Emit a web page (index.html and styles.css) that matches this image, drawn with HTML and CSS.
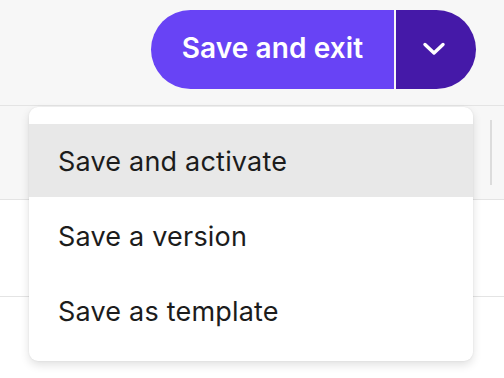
FILE: index.html
```html
<!DOCTYPE html>
<html>
<head>
<meta charset="utf-8">
<link rel="stylesheet" href="styles.css">
</head>
<body>
<div class="page">
  <header class="topbar">
    <div class="split">
      <button class="split-main">Save and exit</button>
      <button class="split-toggle" aria-label="More">
        <svg width="24" height="16" viewBox="0 0 24 16"><path d="M3 3.5 L12 12 L21 3.5" fill="none" stroke="#fff" stroke-width="3.4" stroke-linecap="round" stroke-linejoin="round"/></svg>
      </button>
    </div>
  </header>
  <div class="row row-gray"><span class="vdiv"></span></div>
  <div class="row row-white"></div>
  <ul class="menu">
    <li class="item active">Save and activate</li>
    <li class="item">Save a version</li>
    <li class="item">Save as template</li>
  </ul>
</div>
</body>
</html>
```
FILE: styles.css
```css
html, body { margin: 0; padding: 0; }
body { background: #fff; font-family: Inter, "Noto Sans", sans-serif; }
.page { position: relative; width: 504px; height: 378px; overflow: hidden; }
.topbar {
  height: 106px;
  background: #f7f7f7;
  border-bottom: 1px solid #e4e4e4;
  display: flex;
  justify-content: flex-end;
  align-items: flex-start;
  padding: 10px 28px 0 0;
  box-sizing: border-box;
}
.split { display: flex; height: 79px; gap: 2px; }
.split button { border: 0; margin: 0; font-family: inherit; color: #fff; cursor: pointer; }
.split-main {
  background: #6843f5;
  width: 243px;
  border-radius: 40px 0 0 40px;
  font-size: 28px;
  font-weight: 600;
  padding: 0 0 4px 0;
  letter-spacing: 0.1px;
}
.split-toggle {
  background: #4519a8;
  width: 80px;
  border-radius: 0 40px 40px 0;
  display: flex; align-items: center; justify-content: center;
  padding: 0 4px 2px 0;
}
.row { box-sizing: border-box; }
.row-gray { height: 94px; background: #f7f7f7; border-bottom: 1px solid #e4e4e4; display: flex; justify-content: flex-end; align-items: center; padding-right: 12px; }
.vdiv { width: 2px; height: 65px; background: #dcdcdc; }
.row-white { height: 97px; border-bottom: 1px solid #e4e4e4; }
.menu {
  position: absolute;
  left: 29px; top: 107px;
  width: 444px;
  margin: 0; padding: 17px 0 14px;
  list-style: none;
  background: #fff;
  border-radius: 9px;
  box-shadow: 0 4px 10px rgba(0,0,0,0.12), 0 0 2px rgba(0,0,0,0.08);
  box-sizing: border-box;
}
.item {
  height: 75px;
  display: flex; align-items: center;
  padding: 3px 0 0 29px;
  box-sizing: border-box;
  font-size: 27px;
  color: #1c1c1c;
  letter-spacing: 0.2px;
}
.item.active { background: #e8e8e8; height: 73px; padding-top: 1px; }
```
